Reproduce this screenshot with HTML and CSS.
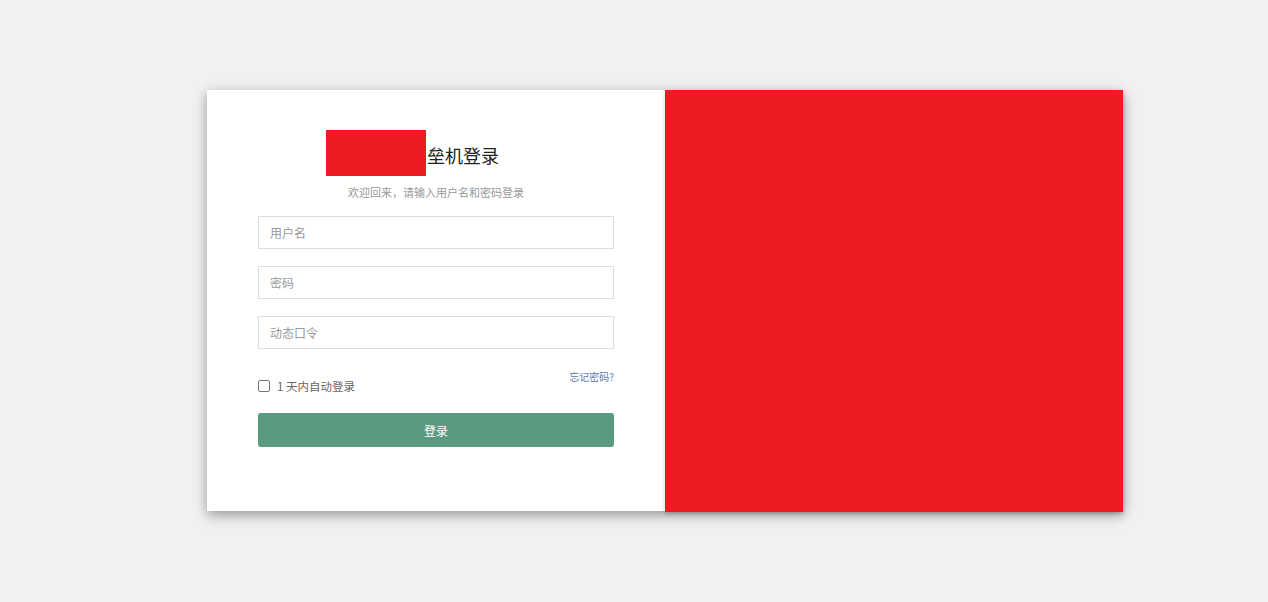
FILE: index.html
```html
<!DOCTYPE html>
<html lang="zh">
<head>
<meta charset="utf-8">
<title>登录</title>
<link rel="stylesheet" href="styles.css">
</head>
<body>
<div class="card">
  <div class="left">
    <div class="form">
      <div class="title-row">
        <div class="logo"></div>
        <span class="title">垒机登录</span>
      </div>
      <div class="subtitle">欢迎回来，请输入用户名和密码登录</div>
      <input class="field" type="text" placeholder="用户名">
      <input class="field" type="password" placeholder="密码">
      <input class="field" type="text" placeholder="动态口令">
      <div class="options">
        <label class="remember"><span class="box"></span>1 天内自动登录</label>
        <a class="forgot" href="#">忘记密码?</a>
      </div>
      <button class="submit" type="button">登录</button>
    </div>
  </div>
  <div class="right"></div>
</div>
</body>
</html>
```
FILE: styles.css
```css
html, body {
  margin: 0;
  padding: 0;
  background: #f1f1f1;
  font-family: "Noto Sans CJK SC", "Liberation Sans", sans-serif;
}
body {
  padding-top: 90px;
  padding-left: 207px;
  height: 512px;
}
.card {
  display: flex;
  width: 916px;
  height: 421px;
  background: #fff;
  box-shadow: 0 4px 12px rgba(0,0,0,0.38);
}
.left {
  width: 458px;
  display: flex;
  justify-content: center;
}
.right {
  width: 458px;
  height: 422px;
  background: #ed1c24;
  box-shadow: 0 2px 4px rgba(0,0,0,0.2);
}
.form {
  width: 356px;
  padding-top: 40px;
  display: flex;
  flex-direction: column;
}
.title-row {
  display: flex;
  align-items: flex-end;
  margin-left: 68px;
  height: 46px;
}
.logo {
  width: 100px;
  height: 46px;
  background: #ed1c24;
}
.title {
  font-size: 18px;
  color: #222;
  line-height: 1;
  margin-bottom: 12px;
  margin-left: 1px;
}
.subtitle {
  text-align: center;
  font-size: 11px;
  color: #999;
  margin-top: 8px;
  height: 17px;
  line-height: 17px;
}
.field {
  box-sizing: border-box;
  width: 356px;
  height: 33px;
  border: 1px solid #dedede;
  outline: none;
  padding: 0 11px;
  font-size: 12px;
  font-family: inherit;
  margin-top: 17px;
}
.field:first-of-type {
  margin-top: 15px;
}
.field::placeholder {
  color: #999;
}
.options {
  display: flex;
  justify-content: space-between;
  align-items: flex-start;
  margin-top: 22px;
  height: 23px;
}
.remember {
  display: flex;
  align-items: center;
  font-size: 11.5px;
  color: #666;
  margin-top: 7px;
}
.box {
  width: 10px;
  height: 10px;
  border: 1px solid #767676;
  border-radius: 2px;
  margin-right: 7px;
  background: #fff;
}
.forgot {
  font-size: 10px;
  color: #5b7aa6;
  text-decoration: none;
  margin-top: -2px;
}
.submit {
  margin-top: 19px;
  height: 34px;
  width: 356px;
  border: none;
  border-radius: 3px;
  background: #5a9a80;
  color: #fff;
  font-size: 12px;
  font-family: inherit;
}
```
